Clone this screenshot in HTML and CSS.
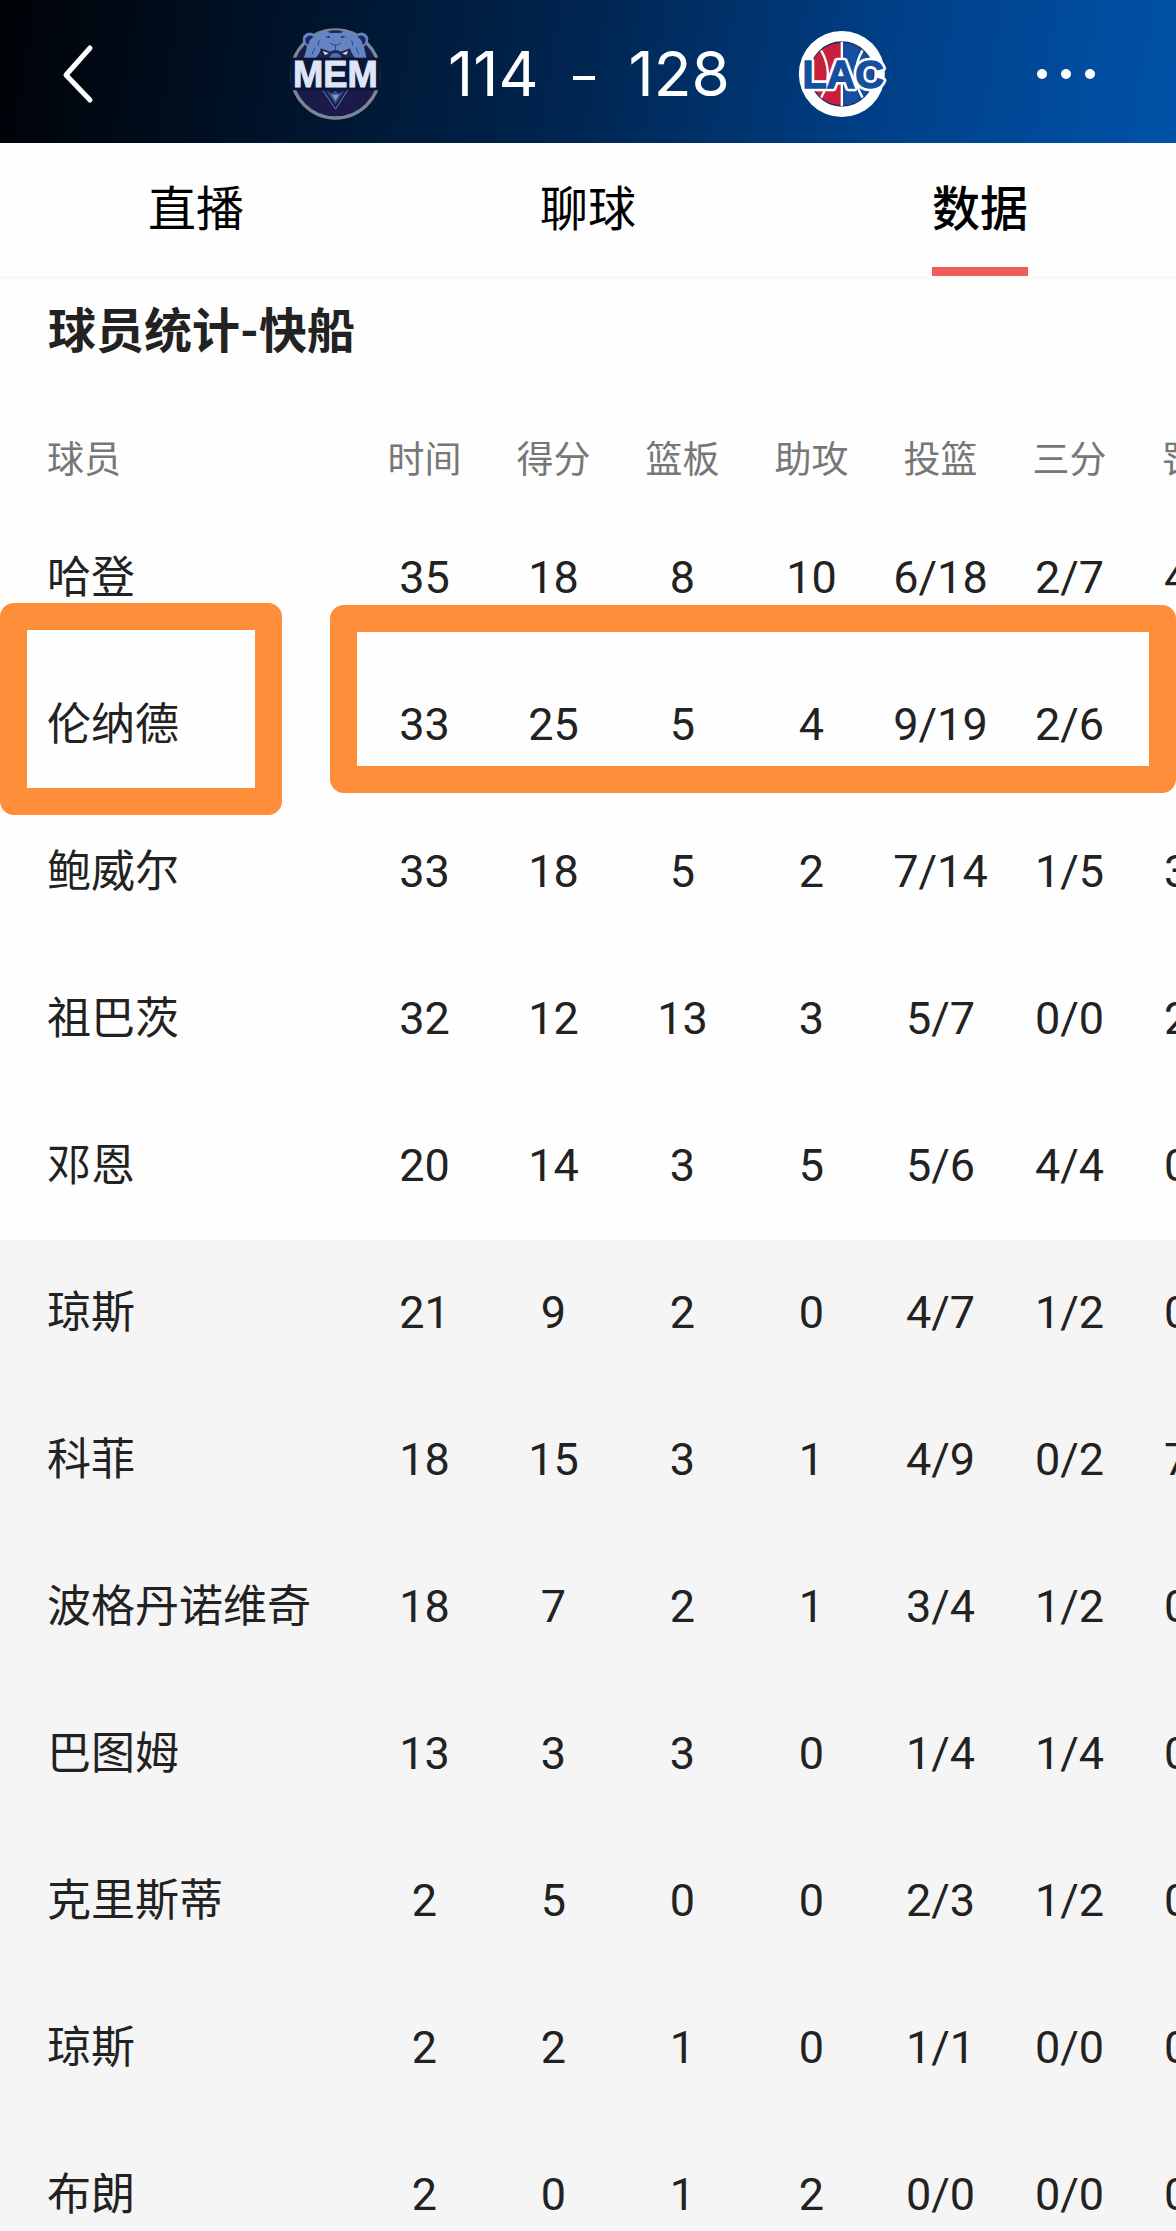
FILE: index.html
```html
<!DOCTYPE html>
<html lang="zh-CN">
<head>
    <meta charset="UTF-8">
    <meta name="viewport" content="width=device-width, initial-scale=1.0">
    <title>数据 - 球员统计</title>
    <link rel="stylesheet" href="styles.css">
</head>
<body>
    <header class="topbar">
        <button type="button" class="back" aria-label="返回">
            <svg width="32" height="60" viewBox="0 0 32 60">
                <path d="M28 4 L4 31 L28 56" fill="none" stroke="#fff" stroke-width="5" stroke-linecap="round" stroke-linejoin="round"/>
            </svg>
        </button>
        <div class="match">
            <svg class="logo" viewBox="36 26 272 282" role="img" aria-label="MEM">
                <circle cx="172" cy="167" r="132" fill="#1b1b4b" stroke="#7d8794" stroke-width="10"/>
                <!-- bear head -->
                <path d="M76 122 Q86 92 86 84 Q68 72 76 52 Q92 34 114 50 Q140 36 172 38 Q204 36 230 50 Q252 34 268 52 Q276 72 258 84 Q258 92 266 122 Z" fill="#6484c4"/>
                <path d="M82 60 Q92 46 106 56 Q92 64 90 80 Q80 74 82 60 Z M262 60 Q252 46 238 56 Q252 64 254 80 Q264 74 262 60 Z" fill="#1b2556"/>
                <path d="M148 40 Q172 32 196 40 Q186 46 172 43 Q158 46 148 40 Z M140 56 l16 -3 -2 6 z M204 56 l-16 -3 2 6 z" fill="#1b2556"/>
                <path d="M156 74 Q164 82 172 80 Q180 82 188 74 M172 80 V100 M110 88 l-8 20 M234 88 l8 20 M124 66 q-6 8 -2 16 M220 66 q6 8 2 16" fill="none" stroke="#2c4485" stroke-width="3"/>
                <path d="M112 120 Q126 104 128 90 L156 100 Q172 92 188 100 L216 90 Q218 104 232 120 Z" fill="#1b2556"/>
                <path d="M134 98 L152 105 L140 110 Z M210 98 L192 105 L204 110 Z" fill="#e6e3c4"/>
                <path d="M154 120 Q156 104 172 104 Q188 104 190 120 Z" fill="#4f6eb0"/>
                <!-- chin -->
                <path d="M134 216 L172 272 L208 216" fill="none" stroke="#6c86bd" stroke-width="3"/>
                <path d="M144 216 L172 258 L198 216 L182 226 L172 218 L160 226 Z" fill="#34508f"/>
                <path d="M160 226 Q172 234 184 226 L172 248 Z" fill="#8298c6"/>
                <rect x="36" y="118" width="272" height="98" fill="#0a1638"/>
                <text x="172" y="207" class="mem-text" text-anchor="middle">MEM</text>
            </svg>
            <div class="score">
                <span>114</span>
                <span class="dash"></span>
                <span>128</span>
            </div>
            <svg class="logo" viewBox="36 26 272 282" role="img" aria-label="LAC">
                <circle cx="170" cy="167" r="129" fill="#fff"/>
                <circle cx="170" cy="167" r="98" fill="#1c2b66"/>
                <path d="M168 74 A93 93 0 0 0 168 260 Z" fill="#c8203c"/>
                <path d="M172 74 A93 93 0 0 1 172 260 Z" fill="#1550a0"/>
                <path d="M170 70 V264 M108 96 Q148 167 108 238 M232 96 Q192 167 232 238" fill="none" stroke="#fff" stroke-width="7"/>
                <text x="174" y="209" class="lac-outline" text-anchor="middle" aria-hidden="true">LAC</text>
                <text x="174" y="209" class="lac-text" text-anchor="middle">LAC</text>
            </svg>
        </div>
        <button type="button" class="more" aria-label="更多">
            <svg width="60" height="12" viewBox="0 0 60 12" fill="#fff">
                <circle cx="6" cy="6" r="5"/>
                <circle cx="30" cy="6" r="5"/>
                <circle cx="54" cy="6" r="5"/>
            </svg>
        </button>
    </header>

    <nav class="tabs">
        <a href="#live">直播</a>
        <a href="#chat">聊球</a>
        <a href="#data" class="active">数据</a>
    </nav>

    <main id="data">
        <h1>球员统计-快船</h1>
        <div class="stats">
            <div class="scroller">
                <table>
                    <thead>
                        <tr>
                            <th class="name">球员</th>
                            <th>时间</th>
                            <th>得分</th>
                            <th>篮板</th>
                            <th>助攻</th>
                            <th>投篮</th>
                            <th>三分</th>
                            <th>罚球</th>
                        </tr>
                    </thead>
                    <tbody>
                        <tr><td class="name">哈登</td><td>35</td><td>18</td><td>8</td><td>10</td><td>6/18</td><td>2/7</td><td>4/4</td></tr>
                        <tr><td class="name">伦纳德</td><td>33</td><td>25</td><td>5</td><td>4</td><td>9/19</td><td>2/6</td><td>5/5</td></tr>
                        <tr><td class="name">鲍威尔</td><td>33</td><td>18</td><td>5</td><td>2</td><td>7/14</td><td>1/5</td><td>3/3</td></tr>
                        <tr><td class="name">祖巴茨</td><td>32</td><td>12</td><td>13</td><td>3</td><td>5/7</td><td>0/0</td><td>2/2</td></tr>
                        <tr><td class="name">邓恩</td><td>20</td><td>14</td><td>3</td><td>5</td><td>5/6</td><td>4/4</td><td>0/0</td></tr>
                    </tbody>
                    <tbody class="bench">
                        <tr><td class="name">琼斯</td><td>21</td><td>9</td><td>2</td><td>0</td><td>4/7</td><td>1/2</td><td>0/0</td></tr>
                        <tr><td class="name">科菲</td><td>18</td><td>15</td><td>3</td><td>1</td><td>4/9</td><td>0/2</td><td>7/7</td></tr>
                        <tr><td class="name">波格丹诺维奇</td><td>18</td><td>7</td><td>2</td><td>1</td><td>3/4</td><td>1/2</td><td>0/0</td></tr>
                        <tr><td class="name">巴图姆</td><td>13</td><td>3</td><td>3</td><td>0</td><td>1/4</td><td>1/4</td><td>0/0</td></tr>
                        <tr><td class="name">克里斯蒂</td><td>2</td><td>5</td><td>0</td><td>0</td><td>2/3</td><td>1/2</td><td>0/0</td></tr>
                        <tr><td class="name">琼斯</td><td>2</td><td>2</td><td>1</td><td>0</td><td>1/1</td><td>0/0</td><td>0/0</td></tr>
                        <tr><td class="name">布朗</td><td>2</td><td>0</td><td>1</td><td>2</td><td>0/0</td><td>0/0</td><td>0/0</td></tr>
                    </tbody>
                </table>
            </div>
            <!-- frames drawn over the second player -->
            <div class="mark mark-name"></div>
            <div class="mark mark-stats"></div>
        </div>
    </main>
</body>
</html>
```
FILE: styles.css
```css
* {
    box-sizing: border-box;
}
body {
    margin: 0;
    height: 100vh;
    overflow: hidden;
    display: flex;
    flex-direction: column;
    background-color: #fefefe;
    color: #222;
    font-family: Roboto, "Noto Sans CJK SC", sans-serif;
}
button {
    background: none;
    border: none;
    padding: 0;
    cursor: pointer;
}
svg {
    display: block;
}

/* top bar */
.topbar {
    display: grid;
    grid-template-columns: 1fr auto 1fr;
    align-items: center;
    flex-shrink: 0;
    height: 143px;
    padding: 4px 80px 0 62px;
    background: linear-gradient(100deg, #000206 0%, #00132a 24%, #002652 50%, #004088 75%, #0052a8 100%);
}
.back {
    justify-self: start;
}
.more {
    justify-self: end;
}
.match {
    display: flex;
    align-items: center;
    gap: 67px;
    margin-left: 20px;
}
.logo {
    width: 91px;
    height: 94px;
}
.mem-text {
    font: bold 109px "Liberation Sans", sans-serif;
    fill: #dfe5f5;
    stroke: #dfe5f5;
    stroke-width: 3px;
}
.lac-text, .lac-outline {
    font: bold 119px "Liberation Sans", sans-serif;
    fill: #1550a0;
    stroke: #1550a0;
    stroke-width: 4px;
}
.lac-outline {
    stroke: #fff;
    stroke-width: 20px;
    stroke-linejoin: round;
}
.score {
    display: flex;
    align-items: center;
    gap: 34px;
    color: #fff;
    font-family: Inter, sans-serif;
    font-size: 62px;
    line-height: 72px;
}
.dash {
    width: 22px;
    height: 4px;
    margin-top: 8px;
    background-color: #fff;
}

/* tabs */
.tabs {
    display: flex;
    flex-shrink: 0;
    height: 136px;
    border-bottom: 3px solid #f8f8f8;
}
.tabs a {
    flex: 1;
    display: flex;
    flex-direction: column;
    align-items: center;
    padding-top: 35px;
    color: #000;
    font-size: 48px;
    line-height: 64px;
    text-decoration: none;
}
.tabs .active {
    font-weight: 500;
}
.tabs .active::after {
    content: "";
    width: 96px;
    height: 9px;
    margin-top: auto;
    background-color: #f05c5c;
}

/* player table */
h1 {
    margin: 0;
    padding: 17px 48px 0;
    font-size: 48px;
    line-height: 72px;
}
.stats {
    position: relative;
    margin-top: 44px;
}
.scroller {
    overflow-x: auto;
    scrollbar-width: none;
}
table {
    width: 1263px;
    table-layout: fixed;
    border-collapse: collapse;
}
th, td {
    width: 129px;
    padding: 0 0 3px;
    text-align: center;
    white-space: nowrap;
}
th {
    height: 93px;
    color: #777;
    font-size: 37px;
    font-weight: normal;
}
td {
    height: 147px;
    font-size: 45px;
}
.name {
    width: 360px;
    padding-left: 47px;
    text-align: left;
}
td.name {
    padding-bottom: 10px;
    font-size: 44px;
}
.bench {
    background-color: #f5f5f5;
}

.mark {
    position: absolute;
    border: 27px solid #ff8e3a;
    border-radius: 14px;
    pointer-events: none;
}
.mark-name {
    top: 191px;
    left: 0;
    width: 282px;
    height: 212px;
}
.mark-stats {
    top: 193px;
    left: 330px;
    right: 0;
    height: 188px;
}
```
